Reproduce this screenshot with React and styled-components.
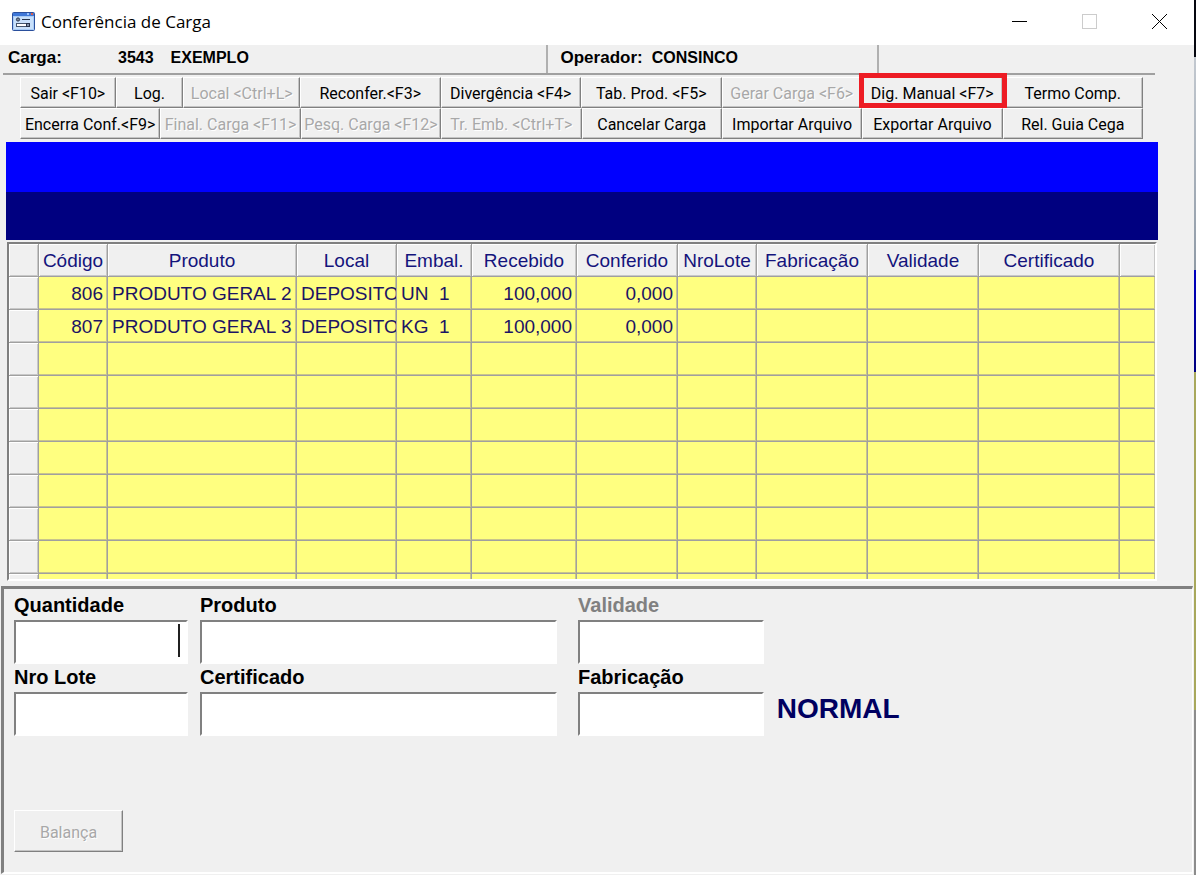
import React from 'react'
import styled, { createGlobalStyle } from 'styled-components'

const GlobalStyle = createGlobalStyle`
    * {
        box-sizing: border-box;
    }

    body {
        margin: 0;
        background: linear-gradient(#05070f 57px, #c3c9d0 57px, #8f9aa6 270px, #0000c0 270px, #000080 372px, #a8a85c 372px, #a8a85c 710px, #8c8c8c 710px);
        font-family: "Liberation Sans", Arial, sans-serif;
        color: #000;
    }

    button, input {
        font-family: inherit;
        border-radius: 0;
        margin: 0;
    }
`

const Window = styled.div`
    display: flex;
    flex-direction: column;
    min-height: calc(100vh - 1px);
    margin-right: 2px;
    background: #f0f0f0;
    border-bottom: 1px solid #606060;
`

const TitleBar = styled.header`
    display: flex;
    align-items: center;
    height: 45px;
    padding: 0 0 2px 12px;
    background: #fff;
`

const Title = styled.h1`
    flex: 1;
    margin: 0 0 0 6px;
    font-family: "Open Sans", "Noto Sans", sans-serif;
    font-size: 17px;
    font-weight: 400;
`

const WindowButton = styled.button`
    display: flex;
    align-items: center;
    justify-content: center;
    width: 70px;
    height: 43px;
    padding: 0;
    border: 0;
    background: none;
    color: #000;

    &:disabled {
        color: #ccc;
    }
`

const StatusBar = styled.div`
    display: grid;
    grid-template-columns: 545fr 332fr 276fr;
    height: 30px;
    margin: 0 39px 0 3px;
    border-bottom: 2px solid #a0a0a0;
`

const StatusCell = styled.div`
    display: flex;
    align-items: center;
    padding: 0 0 2px ${props => props.$indent || 13}px;
    font-size: 16px;
    font-weight: 700;
    border-right: 2px solid #b0b0b0;

    &:last-child {
        border-right: 0;
    }
`

const StatusLabel = styled.span`
    min-width: ${props => props.$width || 0}px;
    margin-right: 9px;
    font-size: 17px;
`

const StatusCode = styled.span`
    margin-right: 17px;
`

const Toolbar = styled.div`
    margin: 2px 51px 3px 20px;
`

const ToolbarRow = styled.div`
    display: grid;
    grid-template-columns: ${props => props.$columns};
    height: 31px;
`

const Button = styled.button`
    min-width: 0;
    padding: 2px 0 0;
    border: 1px solid;
    border-color: #fff #808080 #808080 #fff;
    box-shadow: inset -1px -1px 0 #c4c4c4;
    background: #f0f0f0;
    color: #000;
    font-family: Roboto, sans-serif;
    font-size: 16px;
    white-space: nowrap;

    &:disabled {
        color: #a8a8a8;
        text-shadow: 1px 1px 0 #fff;
    }
`

const MarkedButton = styled(Button)`
    position: relative;

    &::after {
        content: '';
        position: absolute;
        inset: -5px -5px -1px -4px;
        border: 5px solid #ed1c24;
    }
`

const ScaleButton = styled(Button)`
    width: 109px;
    height: 42px;
    margin-top: 73px;
`

const Band = styled.div`
    height: 98px;
    margin: 0 36px 0 6px;
    background: linear-gradient(#0000ff 50px, #000080 50px);
`

const GridFrame = styled.div`
    height: 339px;
    margin: 2px 37px 0 7px;
    overflow: hidden;
    border: 2px solid;
    border-color: #808080 #fff #fff #808080;
`

const Grid = styled.table`
    width: 100%;
    table-layout: fixed;
    border-spacing: 0;
    font-size: 19px;
    color: #1c1464;
`

const HeadCell = styled.th`
    height: 33px;
    padding: 1px 0 0;
    overflow: hidden;
    white-space: nowrap;
    font-weight: 400;
    color: #14147c;
    background: #f0f0f0;
    border-right: 1px solid #a0a0a0;
    border-bottom: 1px solid #a0a0a0;
    box-shadow: inset 1px 1px 0 #fff, inset -1px -1px 0 #c8c8c8;
`

const Cell = styled.td`
    height: 33px;
    padding: 1px 4px 0;
    overflow: hidden;
    white-space: pre;
    text-align: ${props => props.$align || 'left'};
    background: #ffff80;
    border-right: 1px solid #a0a0a0;
    border-bottom: 1px solid #a0a0a0;
    box-shadow: inset -1px -1px 0 #c8c48c;
`

const Panel = styled.form`
    flex: 1;
    margin: 5px 1px 1px;
    padding: 4px 15px 20px 10px;
    border: 3px solid;
    border-color: #808080 #fff #fff #808080;
    border-right-width: 1px;
    border-bottom-width: 2px;
`

const Fields = styled.div`
    display: grid;
    grid-template-columns: 553fr 186fr 402fr;
    column-gap: 12px;
`

const FieldGroup = styled.div`
    display: grid;
    grid-template-columns: ${props => props.$columns || '1fr'};
    column-gap: 12px;
    padding-right: ${props => props.$space || 0}px;
`

const Field = styled.div`
    position: relative;
    min-width: 0;
    height: 72px;
`

const Label = styled.label`
    display: block;
    height: 27px;
    line-height: 24px;
    font-size: 20px;
    font-weight: 700;
    color: ${props => (props.$muted ? '#808080' : '#000')};
`

const Input = styled.input`
    display: block;
    width: 100%;
    height: 44px;
    padding: 0 6px;
    border: 2px solid;
    border-color: #808080 #fff #fff #808080;
    background: #fff;
    font-size: 20px;
    text-align: ${props => props.$align || 'left'};
    outline: 0;
`

const Caret = styled.span`
    position: absolute;
    right: 8px;
    top: 31px;
    width: 2px;
    height: 33px;
    background: #202020;
`

const Mode = styled.output`
    align-self: end;
    padding: 0 0 12px 1px;
    font-size: 28px;
    line-height: 32px;
    font-weight: 700;
    color: #000060;
`

const topActions = [
    { text: 'Sair <F10>' },
    { text: 'Log.' },
    { text: 'Local <Ctrl+L>', disabled: true },
    { text: 'Reconfer.<F3>' },
    { text: 'Divergência <F4>' },
    { text: 'Tab. Prod. <F5>' },
    { text: 'Gerar Carga <F6>', disabled: true },
    { text: 'Dig. Manual <F7>', marked: true },
    { text: 'Termo Comp.' },
]

const bottomActions = [
    { text: 'Encerra Conf.<F9>' },
    { text: 'Final. Carga <F11>', disabled: true },
    { text: 'Pesq. Carga <F12>', disabled: true },
    { text: 'Tr. Emb. <Ctrl+T>', disabled: true },
    { text: 'Cancelar Carga' },
    { text: 'Importar Arquivo' },
    { text: 'Exportar Arquivo' },
    { text: 'Rel. Guia Cega' },
]

const columns = [
    { title: '', width: 30 },
    { title: 'Código', width: 69, align: 'right' },
    { title: 'Produto', width: 189 },
    { title: 'Local', width: 100 },
    { title: 'Embal.', width: 75 },
    { title: 'Recebido', width: 105, align: 'right' },
    { title: 'Conferido', width: 101, align: 'right' },
    { title: 'NroLote', width: 79 },
    { title: 'Fabricação', width: 111 },
    { title: 'Validade', width: 111 },
    { title: 'Certificado', width: 141 },
    { title: '', width: 36 },
]

const Col = styled.col`
    width: ${props => props.$width}px;
`

const items = [
    ['', '806', 'PRODUTO GERAL 2', 'DEPOSITO', 'UN  1', '100,000', '0,000'],
    ['', '807', 'PRODUTO GERAL 3', 'DEPOSITO', 'KG  1', '100,000', '0,000'],
]

// the grid always shows ten lines, filled or not
const rows = Array.from({ length: 10 }, (_, i) => items[i] || [])

const AppIcon = () => (
    <svg width="23" height="19" viewBox="0 0 23 19" aria-hidden="true">
        <rect x="0.5" y="0.5" width="22" height="18" rx="1" fill="#a9ccf5" stroke="#2a4f9c" />
        <rect x="1" y="1" width="21" height="3" fill="#3f78d8" />
        <rect x="15" y="1" width="2" height="2" fill="#9cc4ff" />
        <rect x="19" y="1" width="2" height="2" fill="#d8604c" />
        <rect x="2" y="5" width="19" height="12" fill="#c8e0fb" />
        <circle cx="6" cy="7.5" r="1.6" fill="#7d8899" stroke="#28344c" />
        <path d="M10 7.5h8" stroke="#28344c" />
        <rect x="4.5" y="11.5" width="13" height="3" fill="#fff" stroke="#44546c" />
        <rect x="14.5" y="11.5" width="3" height="3" fill="#8494ac" stroke="#28344c" />
    </svg>
)

const Actions = ({ list, columns }) => (
    <ToolbarRow $columns={columns}>
        {list.map(({ text, disabled, marked }) => {
            const Item = marked ? MarkedButton : Button
            return <Item key={text} type="button" disabled={disabled}>{text}</Item>
        })}
    </ToolbarRow>
)

const TextField = ({ id, label, muted, align, children }) => (
    <Field>
        <Label htmlFor={id} $muted={muted}>{label}</Label>
        <Input id={id} type="text" $align={align} />
        {children}
    </Field>
)

const App = () => (
    <>
        <GlobalStyle />
        <Window>
            <TitleBar>
                <AppIcon />
                <Title>Conferência de Carga</Title>
                <WindowButton type="button" aria-label="Minimizar">
                    <svg width="15" height="15"><path d="M0 7.5h15" stroke="currentColor" /></svg>
                </WindowButton>
                <WindowButton type="button" aria-label="Maximizar" disabled>
                    <svg width="15" height="15"><rect x="0.5" y="0.5" width="14" height="14" fill="none" stroke="currentColor" /></svg>
                </WindowButton>
                <WindowButton type="button" aria-label="Fechar">
                    <svg width="15" height="15"><path d="M0 0l15 15M15 0l-15 15" stroke="currentColor" /></svg>
                </WindowButton>
            </TitleBar>
            <StatusBar>
                <StatusCell $indent={5}>
                    <StatusLabel $width={101}>Carga:</StatusLabel>
                    <StatusCode>3543</StatusCode>
                    EXEMPLO
                </StatusCell>
                <StatusCell>
                    <StatusLabel>Operador:</StatusLabel>
                    CONSINCO
                </StatusCell>
                <StatusCell />
            </StatusBar>
            <Toolbar>
                <Actions list={topActions} columns="96fr 68fr 117fr repeat(6, 141fr)" />
                <Actions list={bottomActions} columns="repeat(8, 1fr)" />
            </Toolbar>
            <Band />
            <GridFrame>
                <Grid>
                    <colgroup>
                        {columns.map((column, i) => <Col key={i} $width={column.width} />)}
                    </colgroup>
                    <thead>
                        <tr>
                            {columns.map((column, i) => <HeadCell key={i}>{column.title}</HeadCell>)}
                        </tr>
                    </thead>
                    <tbody>
                        {rows.map((row, i) => (
                            <tr key={i}>
                                <HeadCell scope="row" />
                                {columns.slice(1).map((column, j) => (
                                    <Cell key={j} $align={column.align}>{row[j + 1]}</Cell>
                                ))}
                            </tr>
                        ))}
                    </tbody>
                </Grid>
            </GridFrame>
            <Panel>
                <Fields>
                    <FieldGroup $columns="174fr 357fr" $space={9}>
                        <TextField id="quantidade" label="Quantidade" align="right">
                            <Caret />
                        </TextField>
                        <TextField id="produto" label="Produto" />
                        <TextField id="lote" label="Nro Lote" />
                        <TextField id="certificado" label="Certificado" />
                    </FieldGroup>
                    <FieldGroup>
                        <TextField id="validade" label="Validade" muted />
                        <TextField id="fabricacao" label="Fabricação" />
                    </FieldGroup>
                    <Mode>NORMAL</Mode>
                </Fields>
                <ScaleButton type="button" disabled>Balança</ScaleButton>
            </Panel>
        </Window>
    </>
)

export default App
